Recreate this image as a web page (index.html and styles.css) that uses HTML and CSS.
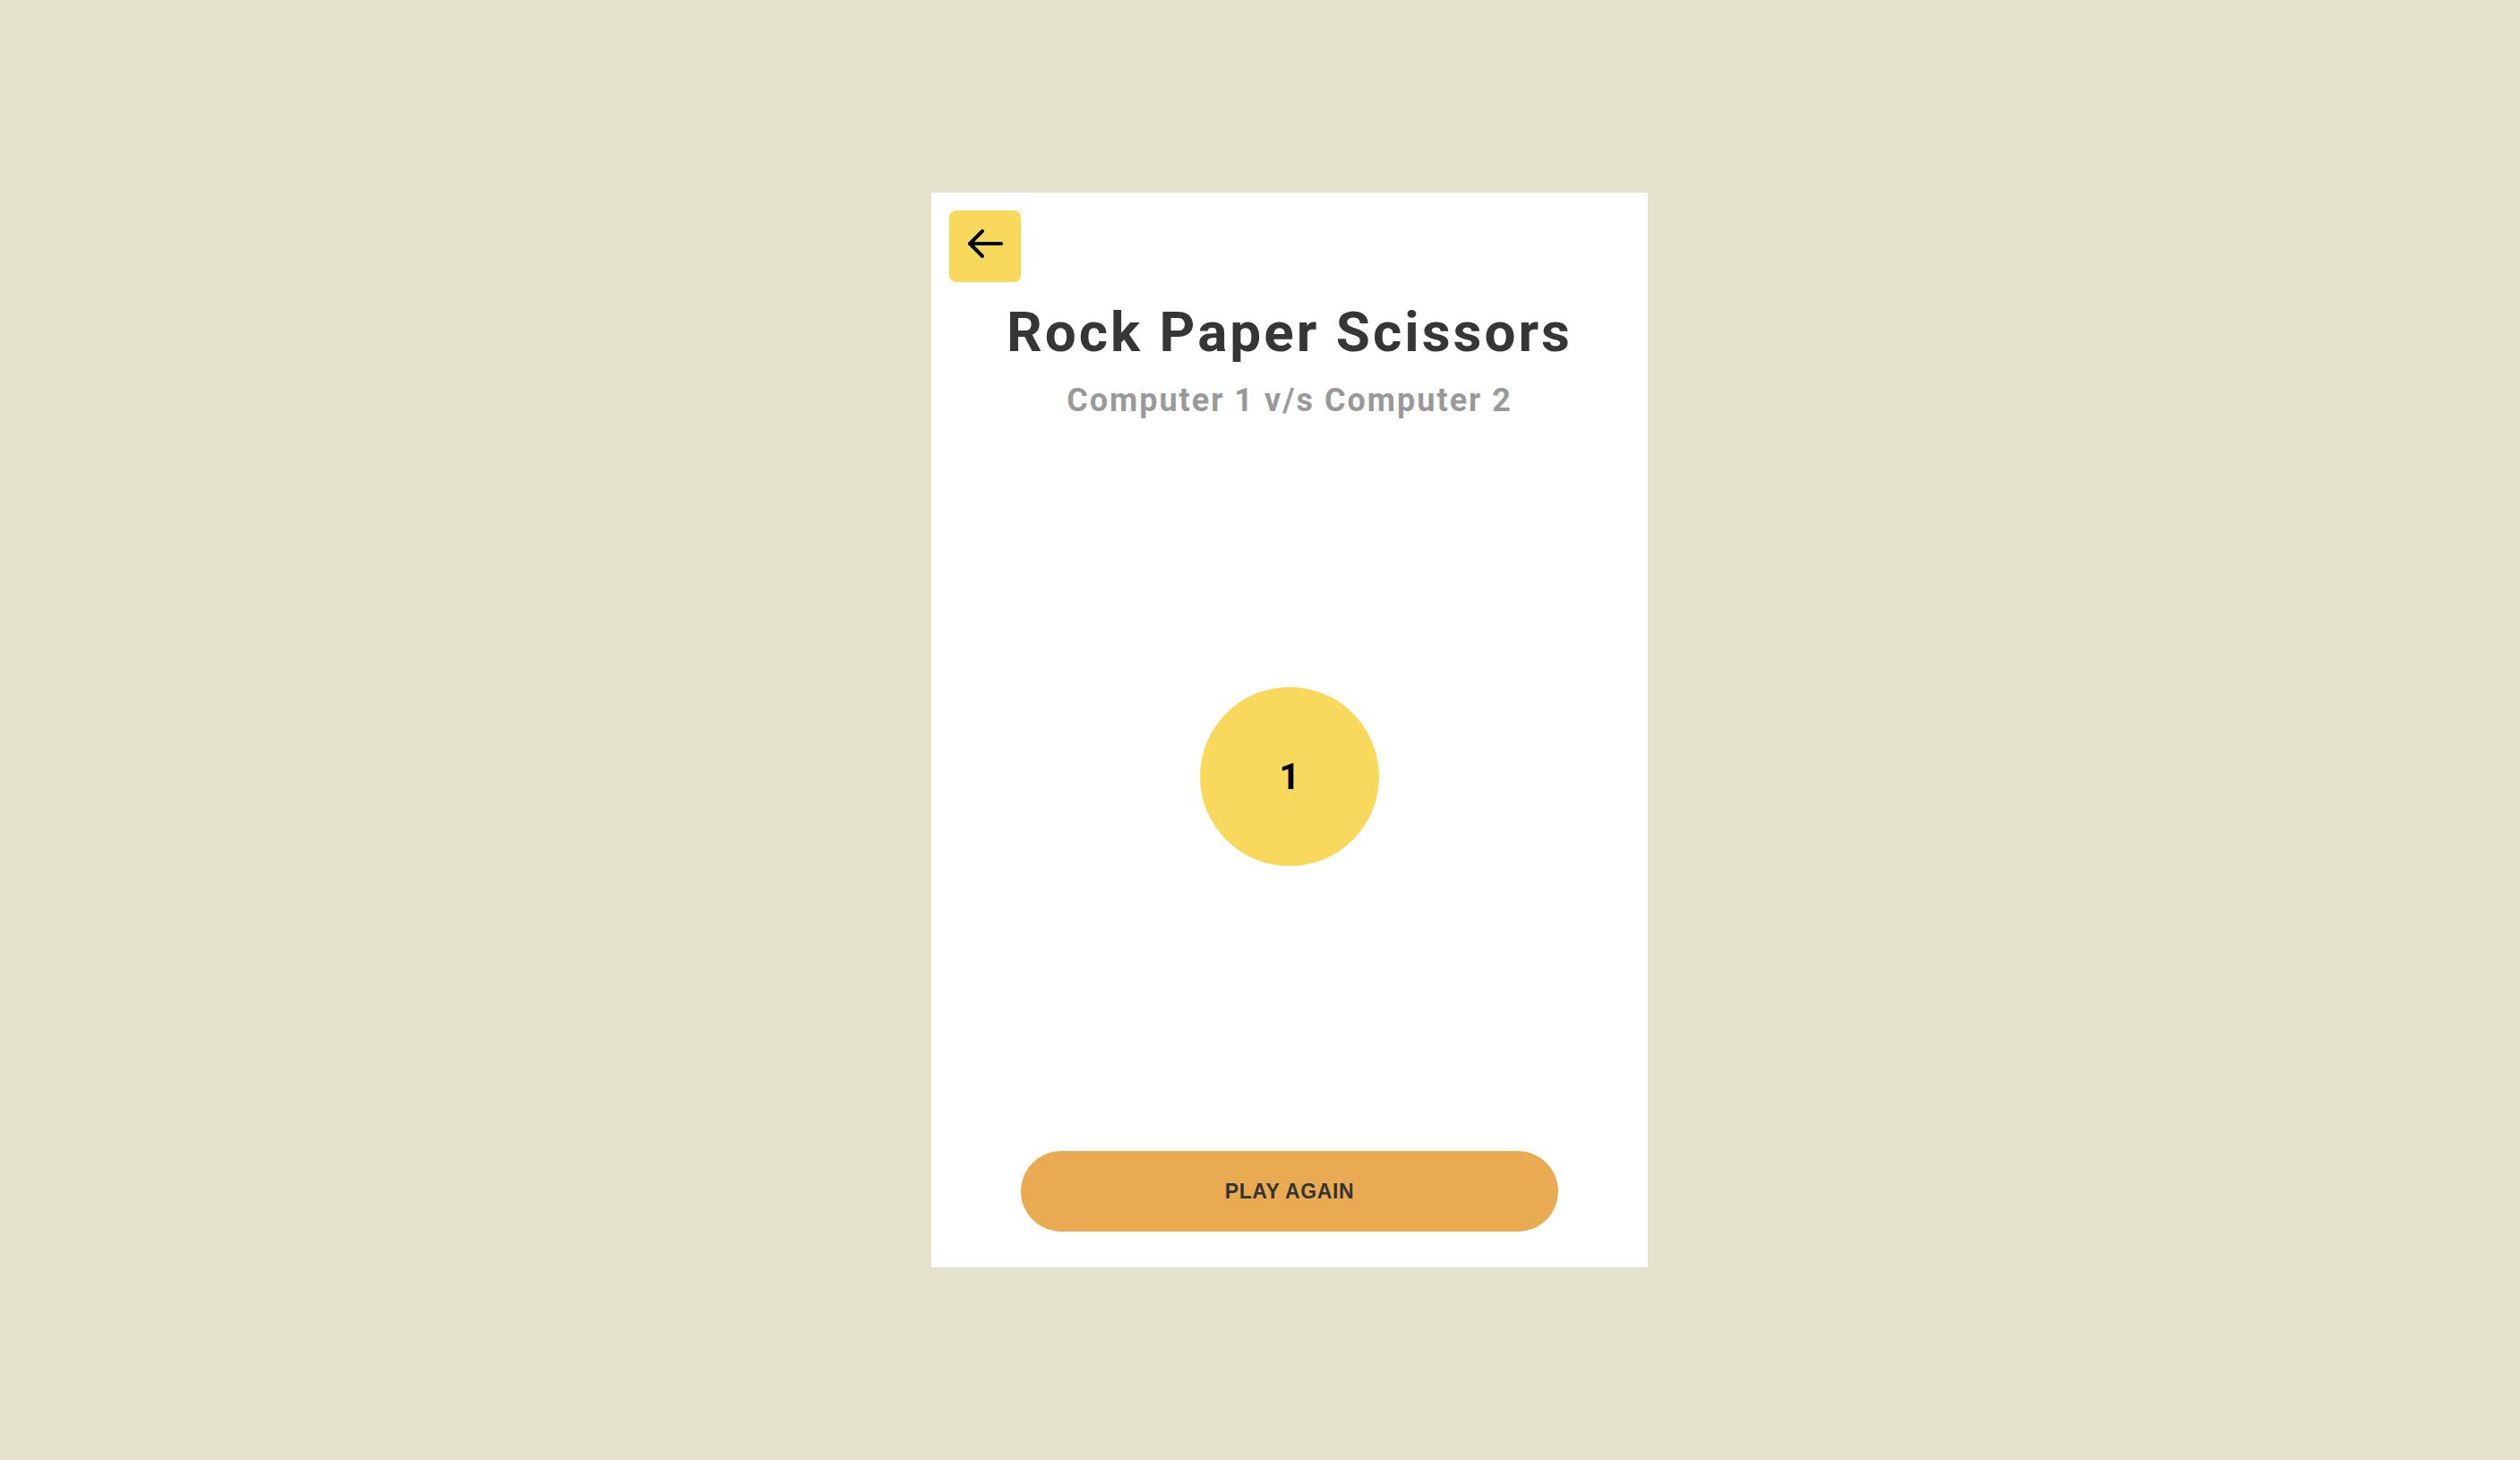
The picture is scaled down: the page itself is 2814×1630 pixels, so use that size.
FILE: index.html
```html
<!DOCTYPE html>
<html lang="en">
<head>
<meta charset="utf-8">
<title>Rock Paper Scissors</title>
<link rel="stylesheet" href="styles.css">
</head>
<body>
  <main class="page">
    <section class="card">
      <div class="topbar">
        <button class="back" aria-label="Back">
          <svg width="80" height="80" viewBox="0 0 80 80" fill="none" stroke="#000" stroke-width="4" stroke-linecap="round" stroke-linejoin="round">
            <path d="M23 37H58"/>
            <path d="M37 23L23 37L37 51"/>
          </svg>
        </button>
      </div>
      <h1 class="title">Rock Paper Scissors</h1>
      <h2 class="subtitle">Computer 1 v/s Computer 2</h2>
      <div class="stage">
        <div class="count">1</div>
      </div>
      <button class="play">PLAY AGAIN</button>
    </section>
  </main>
</body>
</html>
```
FILE: styles.css
```css
html, body {
  margin: 0;
  padding: 0;
}
body {
  background: #e4e2cb;
  font-family: Roboto, "Noto Sans", sans-serif;
}
.page {
  box-sizing: border-box;
  height: 100vh;
  display: flex;
  align-items: center;
  justify-content: center;
  padding-left: 66px;
}
.card {
  box-sizing: border-box;
  width: 800px;
  height: 1200px;
  background: #ffffff;
  padding: 20px 20px 20px;
  display: flex;
  flex-direction: column;
}
.topbar {
  display: flex;
}
.back {
  width: 80px;
  height: 80px;
  padding: 0;
  border: none;
  border-radius: 8px;
  background: #f8d95b;
  display: block;
}
.back svg {
  display: block;
}
.title {
  margin: 20px 0 0;
  text-align: center;
  font-size: 62px;
  line-height: 72px;
  font-weight: 700;
  letter-spacing: 3px;
  color: #363636;
}
.subtitle {
  margin: 19px 0 0;
  text-align: center;
  font-size: 36px;
  line-height: 42px;
  font-weight: 700;
  letter-spacing: 2px;
  color: #999999;
}
.stage {
  flex: 1;
  display: flex;
  align-items: center;
  justify-content: center;
  padding-bottom: 19px;
}
.count {
  width: 200px;
  height: 200px;
  border-radius: 50%;
  background: #f8d95b;
  display: flex;
  align-items: center;
  justify-content: center;
  font-size: 40px;
  font-weight: 700;
  color: #000;
}
.play {
  align-self: center;
  width: 600px;
  height: 90px;
  margin-bottom: 20px;
  border: none;
  border-radius: 45px;
  background: #e8ab52;
  color: #333333;
  font-family: "Liberation Sans", Arial, sans-serif;
  font-size: 23px;
  font-weight: 700;
  letter-spacing: 0.6px;
  padding: 0;
}
```
